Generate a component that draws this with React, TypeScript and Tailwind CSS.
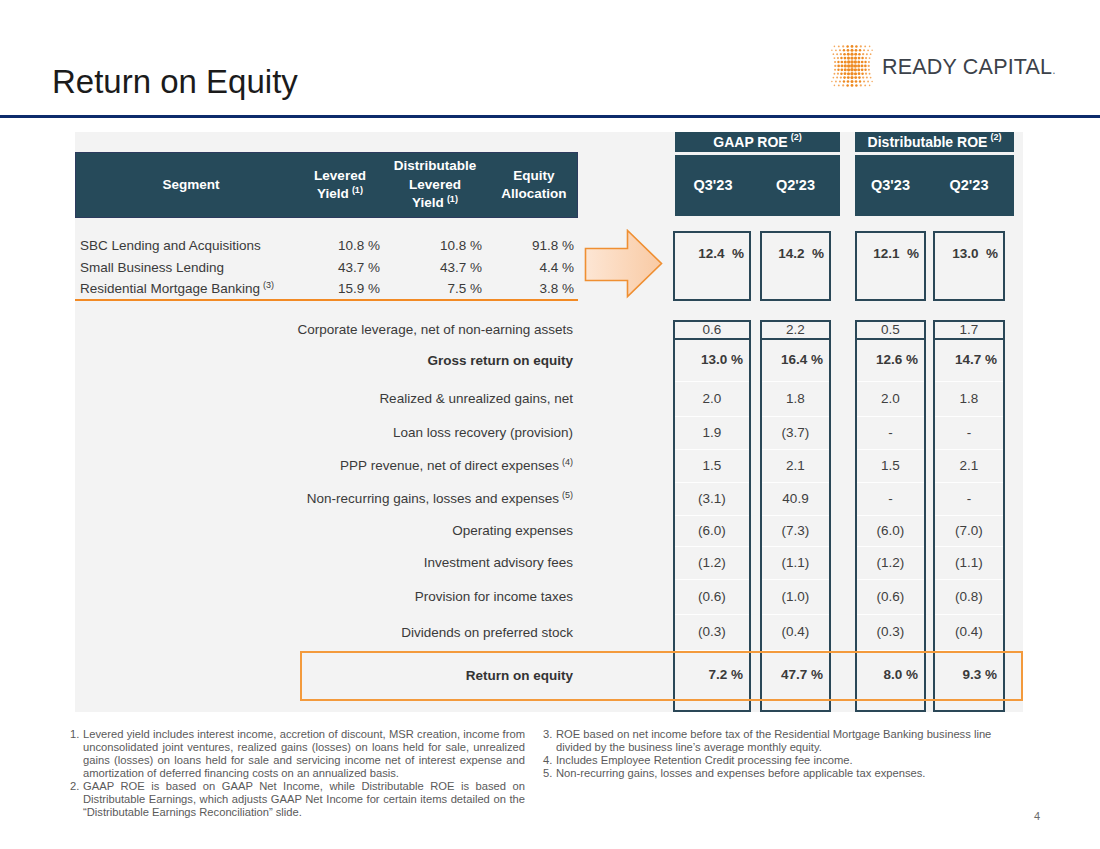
import React from "react"

const font = "font-['Liberation_Sans',Arial,sans-serif]"

type Row = {
  label: string
  sup?: string
  bold?: boolean
  h: number
  vals: string[]
}

const rows: Row[] = [
  { label: "Gross return on equity", bold: true, h: 42, vals: ["13.0 %", "16.4 %", "12.6 %", "14.7 %"] },
  { label: "Realized & unrealized gains, net", h: 35, vals: ["2.0", "1.8", "2.0", "1.8"] },
  { label: "Loan loss recovery (provision)", h: 33, vals: ["1.9", "(3.7)", "-", "-"] },
  { label: "PPP revenue, net of direct expenses", sup: "(4)", h: 33, vals: ["1.5", "2.1", "1.5", "2.1"] },
  { label: "Non-recurring gains, losses and expenses", sup: "(5)", h: 33, vals: ["(3.1)", "40.9", "-", "-"] },
  { label: "Operating expenses", h: 31, vals: ["(6.0)", "(7.3)", "(6.0)", "(7.0)"] },
  { label: "Investment advisory fees", h: 33, vals: ["(1.2)", "(1.1)", "(1.2)", "(1.1)"] },
  { label: "Provision for income taxes", h: 35, vals: ["(0.6)", "(1.0)", "(0.6)", "(0.8)"] },
  { label: "Dividends on preferred stock", h: 36, vals: ["(0.3)", "(0.4)", "(0.3)", "(0.4)"] },
  { label: "Return on equity", bold: true, h: 50, vals: ["7.2 %", "47.7 %", "8.0 %", "9.3 %"] },
]

const segments = [
  { name: "SBC Lending and Acquisitions", vals: ["10.8 %", "10.8 %", "91.8 %"], h: "h-[22px]" },
  { name: "Small Business Lending", vals: ["43.7 %", "43.7 %", "4.4 %"], h: "h-[22px]" },
  { name: "Residential Mortgage Banking", sup: "(3)", vals: ["15.9 %", "7.5 %", "3.8 %"], h: "h-[20px]" },
]

const cols = [
  { w: "w-[78px]", top: "12.4  %", corp: "0.6" },
  { w: "w-[71px]", top: "14.2  %", corp: "2.2" },
  { w: "w-[71px]", top: "12.1  %", corp: "0.5" },
  { w: "w-[72px]", top: "13.0  %", corp: "1.7" },
]

function Logo() {
  const dots: React.ReactNode[] = []
  for (let i = 0; i < 11; i++) {
    const t = (i - 5) / 5
    const f = 0.76 + 0.24 * t * t
    for (let j = 0; j < 11; j++) {
      const u = (j - 5) / 5
      const x = 24 + u * 22 * f
      const y = 2.4 + i * 3.9
      const r = Math.max(0.75, 1.9 - 0.75 * Math.abs(u) - 0.5 * Math.abs(t))
      if (Math.abs(t) > 0.85 && Math.abs(u) > 0.85) continue
      dots.push(
        <circle key={`${i}-${j}`} cx={x} cy={y} r={r} fill={r > 1.15 ? "#ee8a22" : "#f4a85c"} />
      )
    }
  }
  return (
    <svg width="48" height="44" viewBox="0 0 48 44">
      {dots}
    </svg>
  )
}

function Arrow() {
  return (
    <svg width="80" height="70" viewBox="0 0 80 70" className="ml-[6px] mt-[-2px]">
      <defs>
        <linearGradient id="arrowFill" x1="0" y1="0" x2="1" y2="0">
          <stop offset="0" stopColor="#fde6d4" />
          <stop offset="1" stopColor="#f9caa4" />
        </linearGradient>
      </defs>
      <path
        d="M1.5 19.5 H43.5 V1.5 L77.5 34.5 L43.5 67.5 V51.5 H1.5 Z"
        fill="url(#arrowFill)"
        stroke="#ef8f32"
        strokeWidth="1.6"
      />
    </svg>
  )
}

function Sup({ children }: { children: React.ReactNode }) {
  return <sup className="text-[9px] top-[-5px] ml-[3px]">{children}</sup>
}

function ValueCol({ col, idx }: { col: (typeof cols)[number]; idx: number }) {
  return (
    <div className={`${col.w} flex flex-col`}>
      <div className="h-[70px] border-2 border-[#2a4757] flex justify-end pr-[5px] pt-[12px]">
        <span className="text-[13.5px] font-bold text-[#3a3a3a] whitespace-pre leading-[18px]">{col.top}</span>
      </div>
      <div className="h-[19px]" />
      <div className="h-[20px] border-2 border-[#2a4757] flex items-center justify-center text-[13.5px] text-[#404040]">
        {col.corp}
      </div>
      <div className="h-[372px] border-2 border-t-0 border-[#2a4757] flex flex-col">
        {rows.map((r) => (
          <div
            key={r.label}
            style={{ height: r.h }}
            className={
              r.bold
                ? "shrink-0 flex items-center justify-end pr-[6px] text-[13.5px] font-bold text-[#3a3a3a] border-b border-white/90"
                : "shrink-0 flex items-center justify-center text-[13.5px] text-[#404040] border-b border-white/90"
            }
          >
            {r.vals[idx]}
          </div>
        ))}
        <div className="flex-1" />
      </div>
    </div>
  )
}

export default function App() {
  return (
    <div className={`w-[1100px] h-[849px] bg-white overflow-hidden ${font}`}>
      {/* title + logo */}
      <div className="h-[115px] flex">
        <div className="flex-1 pl-[52px] pt-[63px]">
          <h1 className="text-[33px] leading-[38px] text-[#1b1b1b]">Return on Equity</h1>
        </div>
        <div className="w-[272px] pt-[44px] flex items-center gap-[6px] self-start">
          <Logo />
          <span className="text-[21.5px] tracking-[0.2px] text-[#3c424a] leading-none mt-[4px]">
            READY CAPITAL<span className="text-[12px] text-[#6b7078]">.</span>
          </span>
        </div>
      </div>
      <div className="h-[3px] bg-[#0d2b6b]" />

      {/* table panel */}
      <div className="relative mt-[14px] ml-[75px] w-[948px] h-[580px] bg-[#f3f3f3] flex">
        {/* left side */}
        <div className="w-[598px] flex flex-col">
          <div className="h-[20px] shrink-0" />
          <div className="h-[66px] w-[503px] shrink-0 bg-[#264a5a] border border-[#2c3b5e] grid grid-cols-[230px_68px_122px_76px] items-center text-center text-white font-bold text-[13.5px] leading-[18.5px]">
            <div>Segment</div>
            <div>
              Levered
              <br />
              Yield
              <Sup>(1)</Sup>
            </div>
            <div>
              Distributable
              <br />
              Levered
              <br />
              Yield
              <Sup>(1)</Sup>
            </div>
            <div>
              Equity
              <br />
              Allocation
            </div>
          </div>
          <div className="h-[13px] shrink-0" />
          <div className="h-[70px] shrink-0 flex">
            <div className="w-[503px] pt-[4px] border-b-2 border-[#f28a24]">
              {segments.map((s) => (
                <div
                  key={s.name}
                  className={`${s.h} grid grid-cols-[230px_75px_102px_92px] items-center text-[13.5px] text-[#3a3a3a]`}
                >
                  <div className="pl-[5px]">
                    {s.name}
                    {s.sup && <Sup>{s.sup}</Sup>}
                  </div>
                  {s.vals.map((v, i) => (
                    <div key={i} className="text-right">
                      {v}
                    </div>
                  ))}
                </div>
              ))}
            </div>
            <Arrow />
          </div>
          <div className="h-[19px] shrink-0" />
          <div className="h-[20px] shrink-0 flex items-center justify-end pr-[100px] text-[13.5px] text-[#3a3a3a]">
            Corporate leverage, net of non-earning assets
          </div>
          {rows.map((r) => (
            <div
              key={r.label}
              style={{ height: r.h }}
              className={`shrink-0 flex items-center justify-end pr-[100px] text-[13.5px] ${
                r.bold ? "font-bold text-[#333]" : "text-[#3a3a3a]"
              }`}
            >
              <span>
                {r.label}
                {r.sup && <Sup>{r.sup}</Sup>}
              </span>
            </div>
          ))}
        </div>

        {/* GAAP ROE */}
        <div className="w-[167px] flex flex-col">
          <div className="ml-[2px] h-[20px] bg-[#264a5a] flex items-center justify-center text-white font-bold text-[14px]">
            GAAP ROE<Sup>(2)</Sup>
          </div>
          <div className="ml-[2px] mt-[3px] h-[61px] bg-[#264a5a] flex items-center text-white font-bold text-[14.5px]">
            <div className="w-[76px] text-center">Q3'23</div>
            <div className="w-[9px]" />
            <div className="w-[71px] text-center">Q2'23</div>
          </div>
          <div className="mt-[15px] flex gap-[9px]">
            <ValueCol col={cols[0]} idx={0} />
            <ValueCol col={cols[1]} idx={1} />
          </div>
        </div>

        <div className="w-[15px]" />

        {/* Distributable ROE */}
        <div className="w-[159px] flex flex-col">
          <div className="h-[20px] bg-[#264a5a] flex items-center justify-center text-white font-bold text-[14px]">
            Distributable ROE<Sup>(2)</Sup>
          </div>
          <div className="mt-[3px] h-[61px] bg-[#264a5a] flex items-center text-white font-bold text-[14.5px]">
            <div className="w-[71px] text-center">Q3'23</div>
            <div className="w-[7px]" />
            <div className="w-[72px] text-center">Q2'23</div>
          </div>
          <div className="mt-[15px] flex gap-[7px]">
            <ValueCol col={cols[2]} idx={2} />
            <ValueCol col={cols[3]} idx={3} />
          </div>
        </div>

        {/* highlight around return on equity */}
        <div className="absolute left-[225px] top-[519px] w-[723px] h-[50px] border-2 border-[#f39a3c] pointer-events-none" />
      </div>

      {/* footnotes */}
      <div className="mt-[16px] flex text-[11.2px] leading-[13px] text-[#5a5a5a]">
        <div className="ml-[70px] w-[455px]">
          <div className="flex">
            <span className="w-[13px] shrink-0">1.</span>
            <div className="flex-1 min-w-0">
              <div className="text-justify [text-align-last:justify] whitespace-nowrap">
                Levered yield includes interest income, accretion of discount, MSR creation, income from
              </div>
              <div className="text-justify [text-align-last:justify] whitespace-nowrap">
                unconsolidated joint ventures, realized gains (losses) on loans held for sale, unrealized
              </div>
              <div className="text-justify [text-align-last:justify] whitespace-nowrap">
                gains (losses) on loans held for sale and servicing income net of interest expense and
              </div>
              <div className="whitespace-nowrap">amortization of deferred financing costs on an annualized basis.</div>
            </div>
          </div>
          <div className="flex">
            <span className="w-[13px] shrink-0">2.</span>
            <div className="flex-1 min-w-0">
              <div className="text-justify [text-align-last:justify] whitespace-nowrap">
                GAAP ROE is based on GAAP Net Income, while Distributable ROE is based on
              </div>
              <div className="text-justify [text-align-last:justify] whitespace-nowrap">
                Distributable Earnings, which adjusts GAAP Net Income for certain items detailed on the
              </div>
              <div className="whitespace-nowrap">“Distributable Earnings Reconciliation” slide.</div>
            </div>
          </div>
        </div>
        <div className="ml-[18px] w-[497px] flex flex-col">
          <div className="flex">
            <span className="w-[13px] shrink-0">3.</span>
            <div className="whitespace-nowrap">
              ROE based on net income before tax of the Residential Mortgage Banking business line
              <br />
              divided by the business line’s average monthly equity.
            </div>
          </div>
          <div className="flex">
            <span className="w-[13px] shrink-0">4.</span>
            <div>Includes Employee Retention Credit processing fee income.</div>
          </div>
          <div className="flex">
            <span className="w-[13px] shrink-0">5.</span>
            <div>Non-recurring gains, losses and expenses before applicable tax expenses.</div>
          </div>
          <div className="mt-auto self-end text-[11px] text-[#6a6a6a] mb-[-4px]">4</div>
        </div>
      </div>
    </div>
  )
}
